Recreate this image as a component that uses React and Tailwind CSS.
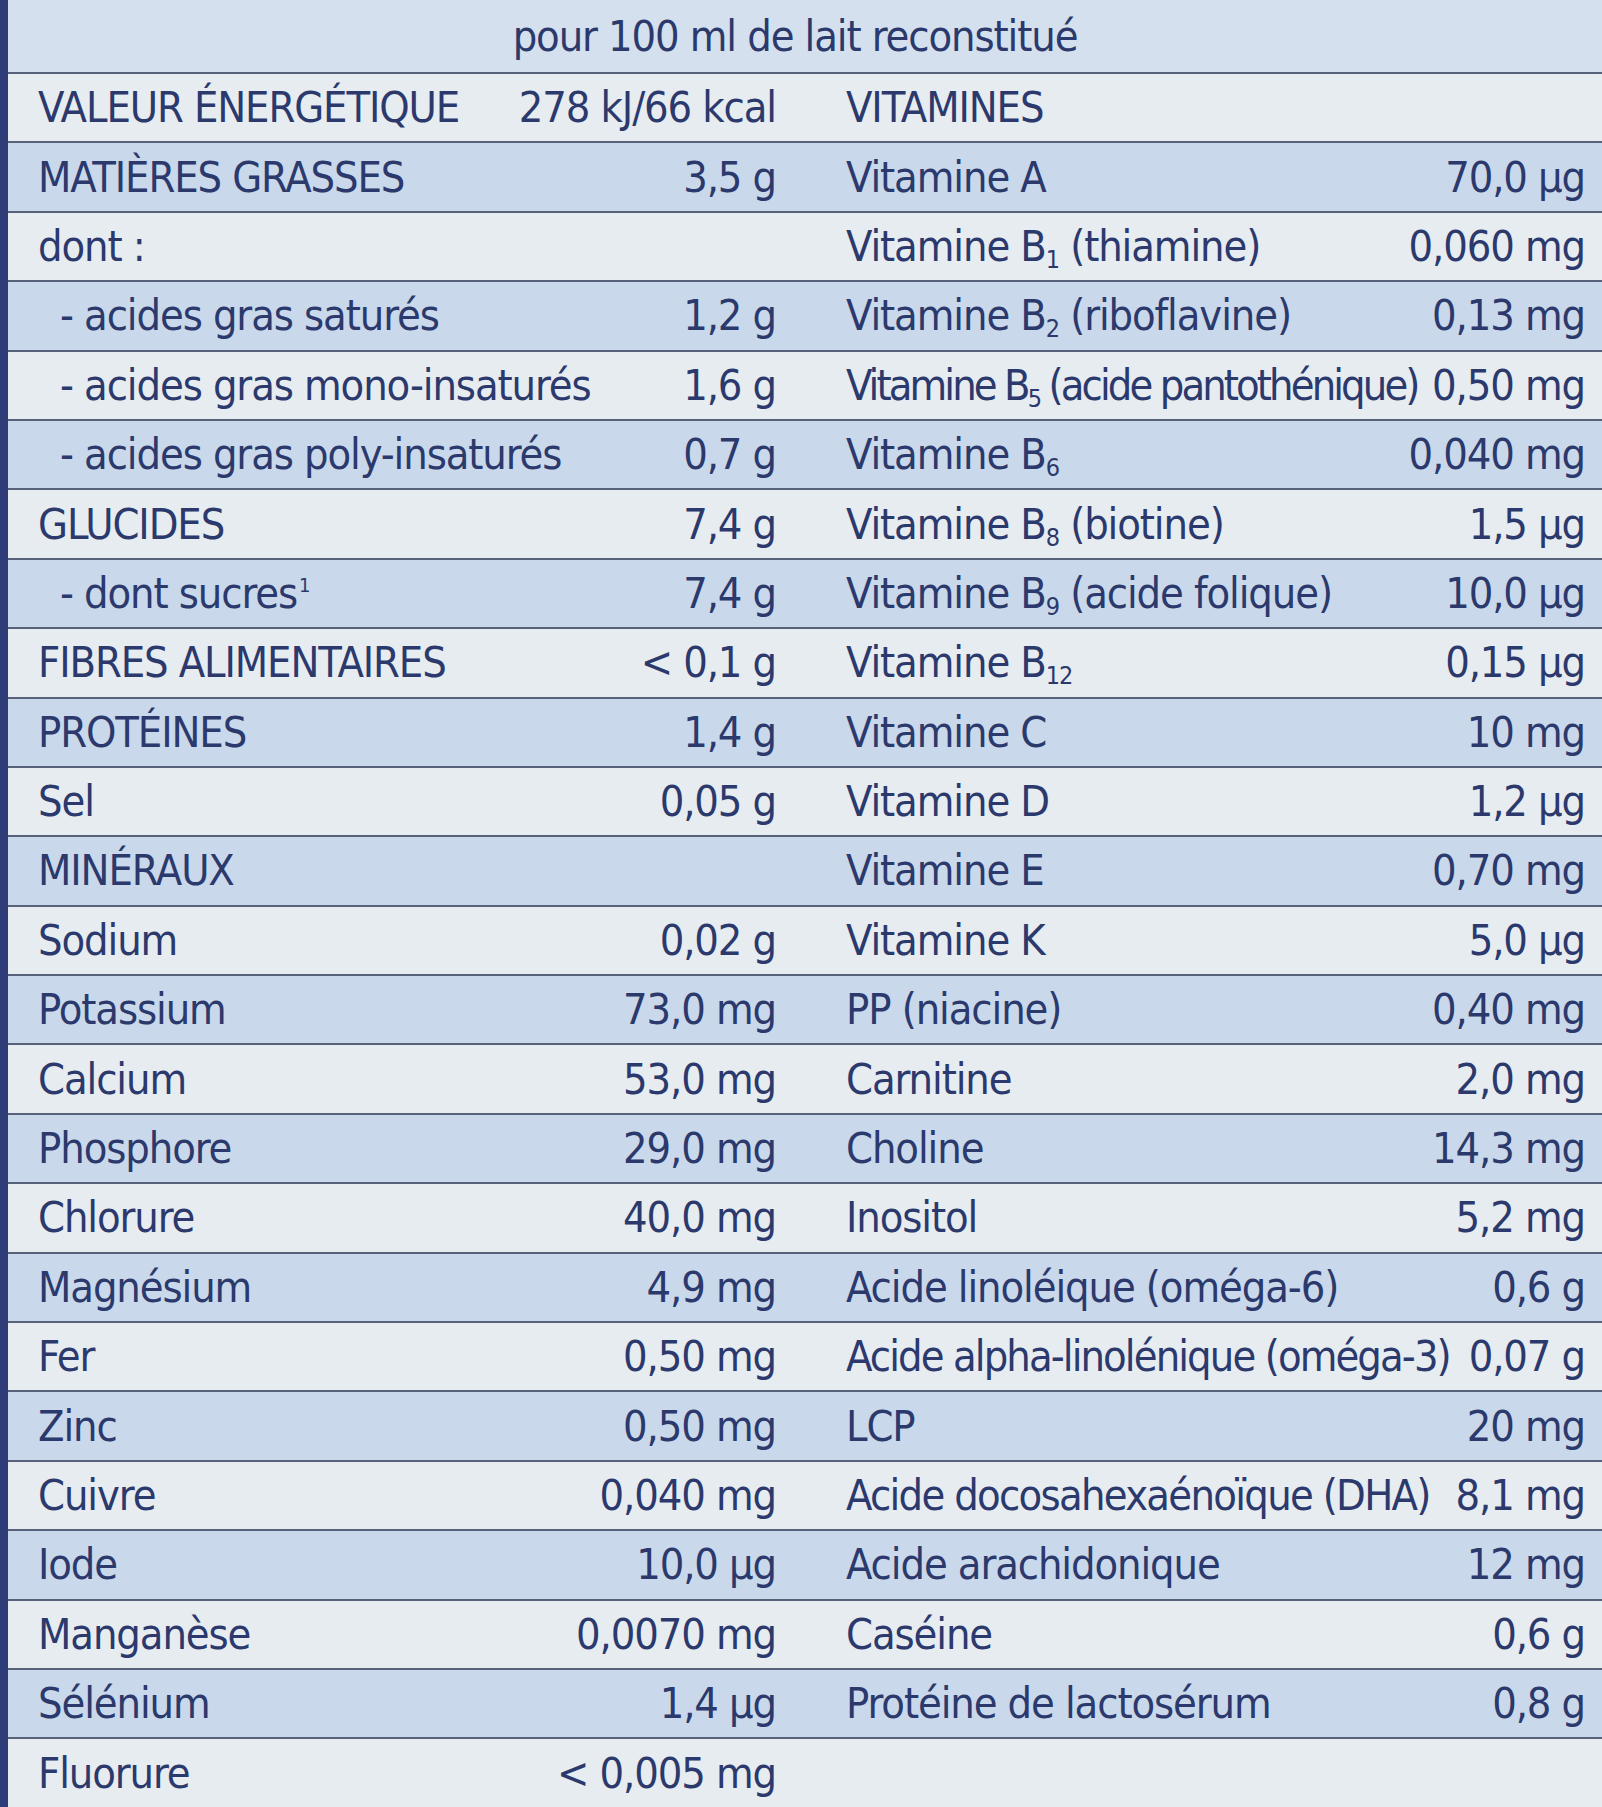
import React from "react";

const rows = [
  { l: "VALEUR ÉNERGÉTIQUE", lv: "278 kJ/66 kcal", r: "VITAMINES", rv: "" },
  { l: "MATIÈRES GRASSES", lv: "3,5 g", r: "Vitamine A", rv: "70,0 µg" },
  { l: "dont :", lv: "", r: "Vitamine", sub: "1", rr: "(thiamine)", rv: "0,060 mg" },
  { l: "- acides gras saturés", indent: true, lv: "1,2 g", r: "Vitamine", sub: "2", rr: "(riboflavine)", rv: "0,13 mg" },
  { l: "- acides gras mono-insaturés", indent: true, lv: "1,6 g", r: "Vitamine", sub: "5", rr: "(acide pantothénique)", rv: "0,50 mg", t: "tracking-[-2.9px]" },
  { l: "- acides gras poly-insaturés", indent: true, lv: "0,7 g", r: "Vitamine", sub: "6", rv: "0,040 mg" },
  { l: "GLUCIDES", lv: "7,4 g", r: "Vitamine", sub: "8", rr: "(biotine)", rv: "1,5 µg" },
  { l: "- dont sucres", sup: "1", indent: true, lv: "7,4 g", r: "Vitamine", sub: "9", rr: "(acide folique)", rv: "10,0 µg" },
  { l: "FIBRES ALIMENTAIRES", lv: "< 0,1 g", r: "Vitamine", sub: "12", rv: "0,15 µg" },
  { l: "PROTÉINES", lv: "1,4 g", r: "Vitamine C", rv: "10 mg" },
  { l: "Sel", lv: "0,05 g", r: "Vitamine D", rv: "1,2 µg" },
  { l: "MINÉRAUX", lv: "", r: "Vitamine E", rv: "0,70 mg" },
  { l: "Sodium", lv: "0,02 g", r: "Vitamine K", rv: "5,0 µg" },
  { l: "Potassium", lv: "73,0 mg", r: "PP (niacine)", rv: "0,40 mg" },
  { l: "Calcium", lv: "53,0 mg", r: "Carnitine", rv: "2,0 mg" },
  { l: "Phosphore", lv: "29,0 mg", r: "Choline", rv: "14,3 mg" },
  { l: "Chlorure", lv: "40,0 mg", r: "Inositol", rv: "5,2 mg" },
  { l: "Magnésium", lv: "4,9 mg", r: "Acide linoléique (oméga-6)", rv: "0,6 g" },
  { l: "Fer", lv: "0,50 mg", r: "Acide alpha-linolénique (oméga-3)", rv: "0,07 g", t: "tracking-[-1.9px]" },
  { l: "Zinc", lv: "0,50 mg", r: "LCP", rv: "20 mg" },
  { l: "Cuivre", lv: "0,040 mg", r: "Acide docosahexaénoïque (DHA)", rv: "8,1 mg", t: "tracking-[-1.7px]" },
  { l: "Iode", lv: "10,0 µg", r: "Acide arachidonique", rv: "12 mg" },
  { l: "Manganèse", lv: "0,0070 mg", r: "Caséine", rv: "0,6 g" },
  { l: "Sélénium", lv: "1,4 µg", r: "Protéine de lactosérum", rv: "0,8 g" },
  { l: "Fluorure", lv: "< 0,005 mg", r: "", rv: "" },
];

const Row = ({ row, shaded }) => (
  <div
    className={`flex h-[69.4px] items-center border-t-2 border-[#58617a] pl-[30px] pr-[17px] ${
      shaded ? "bg-[#c9d8ea]" : "bg-[#e7ecf1]"
    }`}
  >
    <div className="flex w-[738px] shrink-0 items-center justify-between whitespace-nowrap">
      <span className={row.indent ? "pl-[22px]" : ""}>
        {row.l}
        {row.sup && <span className="relative -top-[16px] ml-[2px] text-[20px]">{row.sup}</span>}
      </span>
      <span>{row.lv}</span>
    </div>
    <div className="ml-[70px] flex min-w-0 flex-1 items-center justify-between gap-[12px] whitespace-nowrap">
      <span className={row.t || ""}>
        {row.r}
        {row.sub && (
          <>
            {" B"}
            <span className="relative top-[7px] text-[25px]">{row.sub}</span>
          </>
        )}
        {row.rr && <> {row.rr}</>}
      </span>
      <span>{row.rv}</span>
    </div>
  </div>
);

export default function App() {
  return (
    <div
      className="flex h-[1807px] w-[1602px] overflow-hidden bg-[#dbe4ee] text-[43px] leading-none tracking-[-1.1px] text-[#2b396c]"
      style={{ fontFamily: '"Liberation Sans Narrow", "DejaVu Sans Condensed", "Liberation Sans", sans-serif' }}
    >
      <div className="w-[8px] shrink-0 bg-[#2e3d78]" />
      <div className="flex min-w-0 flex-1 flex-col">
        <div className="flex h-[72px] shrink-0 items-center justify-center bg-[#d4e0ed] pr-[20px]">
          pour 100 ml de lait reconstitué
        </div>
        {rows.map((row, i) => (
          <Row key={i} row={row} shaded={i % 2 === 1} />
        ))}
      </div>
    </div>
  );
}
